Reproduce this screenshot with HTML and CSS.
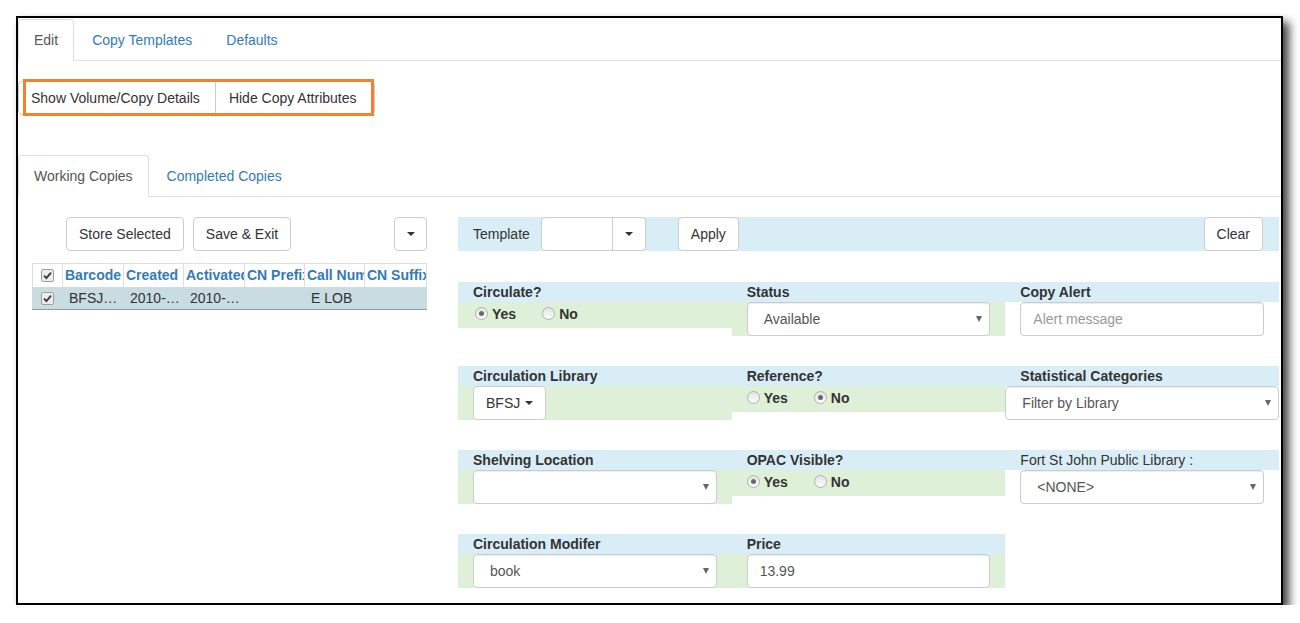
FILE: index.html
```html
<!DOCTYPE html>
<html>
<head>
<meta charset="utf-8">
<title>Copy Editor</title>
<link rel="stylesheet" href="styles.css">
</head>
<body>
<div class="frame">
  <ul class="nav-tabs top-tabs">
    <li class="active"><a>Edit</a></li>
    <li><a>Copy Templates</a></li>
    <li><a>Defaults</a></li>
  </ul>

  <div class="action-bar">
    <div class="btn-group">
      <button class="btn">Show Volume/Copy Details</button>
      <button class="btn">Hide Copy Attributes</button>
      <span class="highlight"></span>
    </div>
  </div>

  <ul class="nav-tabs copy-tabs">
    <li class="active"><a>Working Copies</a></li>
    <li><a>Completed Copies</a></li>
  </ul>

  <div class="workspace">
    <div class="left-pane">
      <div class="grid-toolbar">
        <button class="btn">Store Selected</button>
        <button class="btn">Save &amp; Exit</button>
        <button class="btn btn-caret"><span class="caret"></span></button>
      </div>
      <div class="grid">
        <div class="grid-row grid-head">
          <div class="cell c-check"><svg class="cb" viewBox="0 0 13 13" width="13" height="13"><rect x="0.5" y="0.5" width="12" height="12" rx="1.5" fill="#ececec" stroke="#a0a0a0"/><path d="M3 6.6 L5.4 9 L10 3.6" fill="none" stroke="#3a3a3a" stroke-width="1.9"/></svg></div>
          <div class="cell c-bar">Barcode</div>
          <div class="cell c-cre">Created</div>
          <div class="cell c-act">Activated</div>
          <div class="cell c-pre">CN Prefix</div>
          <div class="cell c-num">Call Number</div>
          <div class="cell c-suf">CN Suffix</div>
        </div>
        <div class="grid-row grid-data">
          <div class="cell c-check"><svg class="cb" viewBox="0 0 13 13" width="13" height="13"><rect x="0.5" y="0.5" width="12" height="12" rx="1.5" fill="#ececec" stroke="#a0a0a0"/><path d="M3 6.6 L5.4 9 L10 3.6" fill="none" stroke="#3a3a3a" stroke-width="1.9"/></svg></div>
          <div class="cell c-bar">BFSJ0000123456</div>
          <div class="cell c-cre">2010-03-15</div>
          <div class="cell c-act">2010-03-15</div>
          <div class="cell c-pre"></div>
          <div class="cell c-num">E LOB</div>
          <div class="cell c-suf"></div>
        </div>
      </div>
    </div>

    <div class="right-pane">
      <div class="template-bar">
        <span class="template-label">Template</span>
        <div class="input-group">
          <span class="ig-input"></span>
          <button class="btn ig-toggle"><span class="caret"></span></button>
        </div>
        <button class="btn apply">Apply</button>
        <button class="btn clear">Clear</button>
      </div>

      <div class="form-rows">
        <div class="form-row">
          <div class="field">
            <div class="field-label">Circulate?</div>
            <div class="field-body green radios first">
              <span class="radio"><span class="dot on"></span>Yes</span>
              <span class="radio"><span class="dot"></span>No</span>
            </div>
          </div>
          <div class="field">
            <div class="field-label">Status</div>
            <div class="field-body green">
              <div class="select"><span>Available</span><span class="sel-caret"></span></div>
            </div>
          </div>
          <div class="field">
            <div class="field-label">Copy Alert</div>
            <div class="field-body">
              <div class="input placeholder">Alert message</div>
            </div>
          </div>
        </div>

        <div class="form-row">
          <div class="field">
            <div class="field-label">Circulation Library</div>
            <div class="field-body green">
              <button class="btn lib-btn">BFSJ<span class="caret"></span></button>
            </div>
          </div>
          <div class="field">
            <div class="field-label">Reference?</div>
            <div class="field-body green radios">
              <span class="radio"><span class="dot"></span>Yes</span>
              <span class="radio"><span class="dot on"></span>No</span>
            </div>
          </div>
          <div class="field">
            <div class="field-label">Statistical Categories</div>
            <div class="field-body flush">
              <div class="select"><span>Filter by Library</span><span class="sel-caret"></span></div>
            </div>
          </div>
        </div>

        <div class="form-row">
          <div class="field">
            <div class="field-label">Shelving Location</div>
            <div class="field-body green">
              <div class="select"><span></span><span class="sel-caret"></span></div>
            </div>
          </div>
          <div class="field">
            <div class="field-label">OPAC Visible?</div>
            <div class="field-body green radios">
              <span class="radio"><span class="dot on"></span>Yes</span>
              <span class="radio"><span class="dot"></span>No</span>
            </div>
          </div>
          <div class="field">
            <div class="field-label plain">Fort St John Public Library :</div>
            <div class="field-body">
              <div class="select"><span>&lt;NONE&gt;</span><span class="sel-caret"></span></div>
            </div>
          </div>
        </div>

        <div class="form-row">
          <div class="field">
            <div class="field-label">Circulation Modifer</div>
            <div class="field-body green">
              <div class="select"><span>book</span><span class="sel-caret"></span></div>
            </div>
          </div>
          <div class="field">
            <div class="field-label">Price</div>
            <div class="field-body green">
              <div class="input">13.99</div>
            </div>
          </div>
        </div>
      </div>
    </div>
  </div>
</div>
</body>
</html>
```

FILE: styles.css
```css
* { box-sizing: border-box; }

body {
  margin: 0;
  background: #fff;
  font-family: "Liberation Sans", Arial, Helvetica, sans-serif;
  font-size: 14px;
  line-height: 20px;
  color: #333;
}

.frame {
  margin: 16px 0 0 16px;
  width: 1267px;
  height: 589px;
  border: 2px solid #000;
  background: #fff;
  box-shadow: 6px 6px 9px rgba(0, 0, 0, 0.75);
  overflow: hidden;
}

/* tabs */
.nav-tabs {
  display: flex;
  list-style: none;
  margin: 0;
  padding: 0;
  border-bottom: 1px solid #ddd;
}
.nav-tabs li { margin-bottom: -1px; }
.nav-tabs a {
  display: block;
  padding: 10px 15px;
  margin-right: 2px;
  border: 1px solid transparent;
  border-radius: 4px 4px 0 0;
  color: #337ab7;
  line-height: 20px;
  white-space: nowrap;
}
.nav-tabs li.active a {
  color: #555;
  background: #fff;
  border-color: #ddd #ddd transparent;
}
.top-tabs { margin-top: 1px; }
.copy-tabs { margin-top: 40px; }

/* buttons */
.btn {
  font: inherit;
  height: 34px;
  padding: 6px 12px;
  border: 1px solid #ccc;
  border-radius: 4px;
  background: #fff;
  color: #333;
  line-height: 20px;
  white-space: nowrap;
  display: inline-flex;
  align-items: center;
  justify-content: center;
}
.caret {
  display: inline-block;
  width: 0;
  height: 0;
  border-top: 4px solid #333;
  border-left: 4px solid transparent;
  border-right: 4px solid transparent;
}

.action-bar {
  margin-top: 20px;
  display: flex;
}
.btn-group {
  position: relative;
  display: flex;
}
.btn-group .btn:first-child {
  border-radius: 4px 0 0 4px;
  padding: 6px 15px 6px 12px;
}
.btn-group .btn + .btn {
  margin-left: -1px;
  border-radius: 0 4px 4px 0;
  padding: 6px 17px 6px 13px;
}
.highlight {
  position: absolute;
  left: 5px;
  top: -2px;
  width: 351px;
  height: 37px;
  border: 3px solid #f5822a;
  pointer-events: none;
}

/* workspace */
.workspace {
  display: flex;
  margin-top: 20px;
}
.left-pane {
  flex: none;
  width: 395px;
  margin-left: 14px;
}
.right-pane {
  flex: none;
  width: 821px;
  margin-left: 31px;
}

.grid-toolbar {
  display: flex;
  gap: 9px;
  padding-left: 34px;
}
.btn-caret {
  margin-left: auto;
  width: 33px;
  padding: 0;
}

/* grid */
.grid {
  margin-top: 12px;
  width: 395px;
  overflow: hidden;
}
.grid-row { display: flex; }
.cell {
  flex: none;
  overflow: hidden;
  white-space: nowrap;
}
.c-check { width: 31px; display: flex; align-items: center; justify-content: center; }
.c-bar { width: 61px; }
.c-cre { width: 60px; }
.c-act { width: 61px; }
.c-pre { width: 60px; }
.c-num { width: 60px; }
.c-suf { width: 62px; }

.grid-head {
  height: 24px;
  border-top: 1px solid #ddd;
  border-left: 1px solid #ddd;
}
.grid-head .cell {
  border-right: 1px solid #ddd;
  padding-left: 2px;
  font-weight: bold;
  color: #337ab7;
  line-height: 23px;
}
.grid-head .c-check { width: 30px; padding-left: 0; }
.grid-data {
  height: 23px;
  background: #c8dce1;
  border-bottom: 1px solid #8f9a9c;
}
.grid-data .cell {
  padding: 0 2px 0 6px;
  line-height: 22px;
  text-overflow: ellipsis;
}
.grid-data .c-check { padding: 0; }
.cb { display: block; }

/* template bar */
.template-bar {
  display: flex;
  align-items: center;
  height: 34px;
  background: #d9edf7;
  padding-left: 15px;
}
.template-label { margin-right: 11px; }
.input-group { display: flex; }
.ig-input {
  width: 72px;
  height: 34px;
  border: 1px solid #ccc;
  border-radius: 4px 0 0 4px;
  background: #fff;
}
.ig-toggle {
  width: 34px;
  padding: 0;
  margin-left: -1px;
  border-radius: 0 4px 4px 0;
}
.apply { margin-left: 32px; }
.clear { margin-left: auto; margin-right: 16px; }

/* form */
.form-rows { margin-top: 31px; }
.form-row {
  display: grid;
  grid-template-columns: repeat(3, 1fr);
  align-items: start;
  margin-bottom: 30px;
}
.field-label {
  height: 20px;
  line-height: 20px;
  background: #d9edf7;
  padding: 0 15px;
  font-weight: bold;
  white-space: nowrap;
}
.field-label.plain { font-weight: normal; }
.field-body { padding: 0 15px; }
.field-body.green { background: #dff0d8; }
.field-body.flush { padding: 0; }

.radios {
  height: 26px;
  display: flex;
  align-items: center;
  padding-bottom: 3px;
}
.radios.first { padding-left: 17px; }
.radio {
  display: inline-flex;
  align-items: center;
  font-weight: bold;
}
.radio + .radio { margin-left: 26px; }
.dot {
  position: relative;
  width: 13px;
  height: 13px;
  margin-right: 4px;
  border-radius: 50%;
  border: 1px solid #b0b0b0;
  background: linear-gradient(#e4e4e4, #fcfcfc);
}
.dot.on::after {
  content: "";
  position: absolute;
  left: 3px;
  top: 3px;
  width: 5px;
  height: 5px;
  border-radius: 50%;
  background: #6a6a6a;
}

.select,
.input {
  height: 34px;
  border: 1px solid #ccc;
  border-radius: 4px;
  background: #fff;
  box-shadow: inset 0 1px 1px rgba(0, 0, 0, 0.075);
  display: flex;
  align-items: center;
  color: #555;
  white-space: nowrap;
}
.select {
  justify-content: space-between;
  padding: 0 7px 0 16px;
}
.input { padding: 0 12px; }
.input.placeholder { color: #999; }
.sel-caret {
  width: 0;
  height: 0;
  border-top: 6px solid #666;
  border-left: 3.5px solid transparent;
  border-right: 3.5px solid transparent;
}

.lib-btn {
  padding: 6px 12px;
}
.lib-btn .caret { margin-left: 5px; }
```
